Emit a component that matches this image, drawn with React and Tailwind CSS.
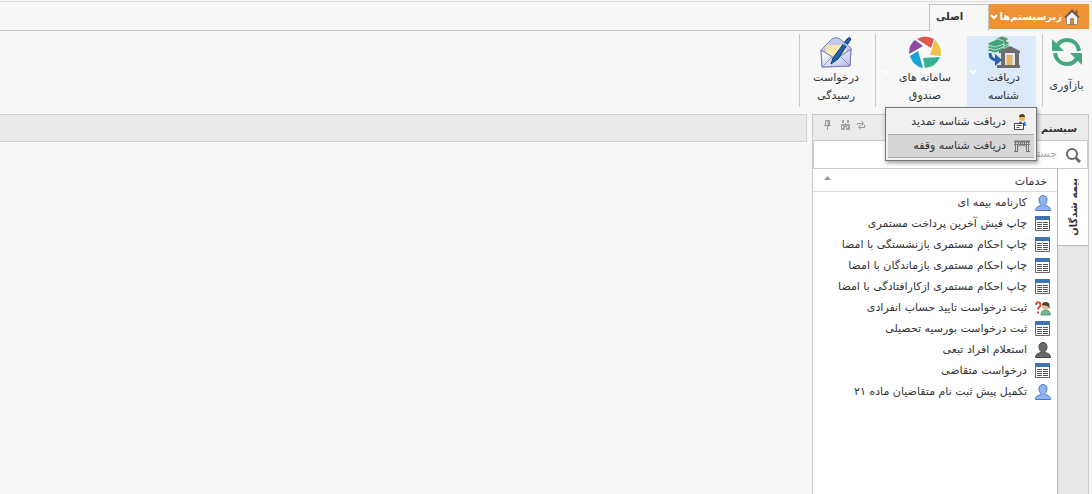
const houseColors = { wall: '#f7f4ef', roof: '#4f5560', door: '#c98a45' };

function HomeIcon() {
  return (
    <svg className="h-4 w-4 shrink-0" viewBox="0 0 16 16">
      <path d="M11.5 1.5h2v4l-2-2z" fill="#8d4b3a" />
      <path d="M2.500 8 8 3l5.500 5v7.500h-11z" fill={houseColors.wall} stroke="#888" strokeWidth=".8" />
      <path d="M1 8.500 8 1.500l7 7" fill="none" stroke={houseColors.roof} strokeWidth="1.600" />
      <path d="M6.500 9.500h3v6h-3z" fill={houseColors.door} stroke="#555" strokeWidth=".5" />
    </svg>
  );
}

function ReloadIcon() {
  return (
    <svg className="h-8 w-8" viewBox="0 0 32 32" fill="none" stroke="#43a780" strokeWidth="4">
      <path d="M6 10C8 6 12 4 16 4c6 0 11 4 12 11" />
      <path d="M26 22c-2 4-6 6-10 6-6 0-11-4-12-11" />
      <path d="M1 3v12h12zM31 29V17H19z" fill="#43a780" stroke="none" />
    </svg>
  );
}

function BankIcon() {
  return (
    <svg className="h-8 w-8" viewBox="0 0 32 32">
      <g fill="#43a77c" stroke="#e6f4ee" strokeWidth=".7">
        <path d="m8 9 7-3 6 2v2l-7 4-6-3z" />
        <path d="m8 7 7-3 6 2v2l-7 3-6-2z" />
        <path d="m7 3 7-3 6 2v2l-7 3-6-2z" />
        <path d="m0 13 9-4 7 2v3l-9 3-7-2z" />
        <path d="m0 10 9-4 7 2v3l-9 3-7-2z" />
        <path d="m0 7 9-4 7 2v3l-9 3-7-2z" />
      </g>
      <path d="m11 2 2-1 5 3v2l-2 1V5z" fill="#7b8583" />
      <path d="M11 15 22 10l10 5v2H11z" fill="#6d6d6d" />
      <path d="M13 17h4v12h-4zM27 17h4v12h-4zM9 29h23v3H9z" fill="#6d6d6d" />
      <path d="M18.500 19h6v10h-6z" fill="#e5b366" />
      <path d="M2 17c0 5 3 7 7 7" fill="none" stroke="#2d62ae" strokeWidth="3" />
      <path d="m7 18 7 6-7 6z" fill="#2d62ae" />
    </svg>
  );
}

function ApertureIcon() {
  return (
    <svg className="h-8 w-8" viewBox="0 0 32 32">
      <path d="M8 3Q16-2 25 3L22 12z" fill="#e2574c" />
      <path d="M26 4q7 7 6 16l-11-1z" fill="#efc050" />
      <path d="M31 21q-4 10-15 11l-2-10z" fill="#35b294" />
      <path d="M14 32Q4 30 1 20l8-5z" fill="#16a2d7" />
      <path d="M0 18Q0 8 6 4l8 6z" fill="#8e4a9e" />
    </svg>
  );
}

function LetterIcon() {
  return (
    <svg className="h-8 w-8" viewBox="0 0 32 32">
      <defs>
        <linearGradient id="paper" x1="0" y1="0" x2="1" y2="1">
          <stop offset="0" stopColor="#fff" />
          <stop offset="1" stopColor="#b9bfe9" />
        </linearGradient>
      </defs>
      <path d="M1 14 12 3q4-3 8 0l11 9-1 18-28 1z" fill="#c5c9ee" stroke="#8085bd" />
      <path d="M6 9h20v12H6z" fill="#fbe6b5" />
      <path d="m1 14 15 9 15-10-1 17-28 1z" fill="url(#paper)" stroke="#7278b5" />
      <path d="m2 31 10-10M30 30 20 20" stroke="#8c91c8" />
      <path d="M13 22 27 3q3-3 4 0L18 23l-7 5z" fill="#1f62ae" stroke="#123a70" />
      <path d="m23 7 5 3" stroke="#a9c8ea" strokeWidth="1.500" />
    </svg>
  );
}

function PersonIcon({ dark }) {
  return (
    <svg className="h-4 w-4" viewBox="0 0 16 16">
      <path
        d="M4 4.500c0-5.300 8-5.300 8 0 0 2.500-.9 4-2 5v1c2.500.8 5.500 1.200 5.500 5H.5c0-3.800 3-4.200 5.500-5v-1c-1.100-1-2-2.500-2-5z"
        fill={dark ? '#6a6a6a' : '#8fb4f3'}
        stroke={dark ? '#444' : '#4a77c4'}
      />
    </svg>
  );
}

function TableIcon() {
  return (
    <svg className="h-4 w-4" viewBox="0 0 16 16">
      <path d="M.5 1.500h14v13H.5z" fill="#fff" stroke="#666" />
      <path d="M0 0h15v4H0z" fill="#3f73b8" />
      <path d="M2 6.500h5M2 8.500h5M2 10.500h5M2 12.500h5M8 6.500h5M8 8.500h5M8 10.500h5M8 12.500h5" stroke="#555" />
    </svg>
  );
}

function QuestionIcon() {
  return (
    <svg className="h-4 w-4" viewBox="0 0 16 16">
      <path d="M1 5c0-4 5-3 4.500 0-.3 2-2.500 2-2.500 4.500M3 11.500v2" fill="none" stroke="#df4a35" strokeWidth="2" />
      <path d="M6 15c0-4 2-5 5-5s4 2 4.500 5z" fill="#6fb795" stroke="#3d7d60" strokeWidth=".7" />
      <circle cx="10.500" cy="6" r="3.500" fill="#e6bd91" />
      <path d="M7 5c0-4 7.500-4 7.500 0v4l-2-3z" fill="#4d4038" />
    </svg>
  );
}

function ClerkIcon() {
  return (
    <svg className="h-4 w-4" viewBox="0 0 16 16">
      <path d="M4 11c0-3 2-4 4.500-4S12 8 12 12H4z" fill="#3d7fd0" />
      <path d="m7 7 2 3 1-3z" fill="#fff" />
      <circle cx="8" cy="4" r="3" fill="#f0b548" />
      <path d="M5 3c0-4 6-4 6 0z" fill="#5a3a1d" />
      <path d="M.5 9.500h9v6h-9z" fill="#fff" stroke="#444" />
      <path d="M2.500 11.500h5M2.500 13.500h3" stroke="#555" />
    </svg>
  );
}

function GateIcon() {
  return (
    <svg className="h-4 w-4" viewBox="0 0 16 16" fill="none" stroke="#777">
      <path d="M0 3.500h16" strokeWidth="2" />
      <path d="M0 6.500h16M4.500 3v4M6.500 3v4M8.500 3v4M10.500 3v4M12.500 3v4M1.500 3v11M3.500 6v8M14.500 3v11M12.500 6v8M0 13.500h4M12 13.500h4" />
      <path d="M4 9q1-2 4-2t4 2" />
    </svg>
  );
}

function Chevron() {
  return (
    <svg className="h-2 w-2 shrink-0" viewBox="0 0 8 8" fill="none" stroke="#fff" strokeWidth="2">
      <path d="m1 2 3 3 3-3" />
    </svg>
  );
}

const services = [
  { title: 'کارنامه بیمه ای', icon: <PersonIcon /> },
  { title: 'چاپ فیش آخرین پرداخت مستمری', icon: <TableIcon /> },
  { title: 'چاپ احکام مستمری بازنشستگی با امضا', icon: <TableIcon /> },
  { title: 'چاپ احکام مستمری بازماندگان با امضا', icon: <TableIcon /> },
  { title: 'چاپ احکام مستمری ازکارافتادگی با امضا', icon: <TableIcon /> },
  { title: 'ثبت درخواست تایید حساب انفرادی', icon: <QuestionIcon /> },
  { title: 'ثبت درخواست بورسیه تحصیلی', icon: <TableIcon /> },
  { title: 'استعلام افراد تبعی', icon: <PersonIcon dark /> },
  { title: 'درخواست متقاضی', icon: <TableIcon /> },
  { title: 'تکمیل پیش ثبت نام متقاضیان ماده ۲۱', icon: <PersonIcon /> },
];

function TopTabs() {
  return (
    <nav className="flex h-[30px] border-t border-[#ddd] pr-[3px] pt-[2px]">
      <button className="flex h-[25px] w-[100px] items-center gap-[2px] bg-[#ef9234] pr-[9px] text-[10px] font-bold text-white">
        <HomeIcon />
        <span className="whitespace-nowrap">زیرسیستم‌ها</span>
        <Chevron />
      </button>
      <button className="w-[60px] border-x border-t border-[#c4c4c4] pb-1 pl-[6px] text-left text-[10px] font-bold text-[#333]">
        اصلی
      </button>
      <div className="flex-1 border-b border-[#c4c4c4]" />
    </nav>
  );
}

function RibbonButton({ icon, lines, className }) {
  return (
    <button className={`flex flex-col items-center text-[11px] leading-[18px] whitespace-nowrap ${className}`}>
      <span className="mb-px">{icon}</span>
      {lines.map((line) => (
        <span key={line}>{line}</span>
      ))}
    </button>
  );
}

function DropMenu() {
  return (
    <div className="absolute top-[71px] -right-px z-10 w-[152px] border border-[#777] bg-[#f0f0f0] p-[2px] text-[11px] shadow-[1px_2px_4px_rgba(0,0,0,0.4)]">
      <button className="flex h-6 w-full items-center gap-2 pr-1 whitespace-nowrap">
        <ClerkIcon />
        دریافت شناسه تمدید
      </button>
      <button className="flex h-6 w-full items-center gap-2 border-y border-[#aaa] bg-[#d6d6d6] pr-1 whitespace-nowrap">
        <GateIcon />
        دریافت شناسه وقفه
      </button>
    </div>
  );
}

function Ribbon() {
  return (
    <div className="flex h-[83px] pt-[3px] pr-[3px]">
      <RibbonButton icon={<ReloadIcon />} lines={['بازآوری']} className="w-[46px] gap-2 pt-[2px] pl-px" />
      <div className="ml-[6px] h-[73px] w-px bg-[#c8c8c8]" />
      <div className="relative mt-[2px] h-[70px] w-[69px] bg-[#dbeafb]">
        <RibbonButton icon={<BankIcon />} lines={['دریافت', 'شناسه']} className="w-full pl-1" />
        <div className="absolute top-8 left-[2px]">
          <Chevron />
        </div>
        <DropMenu />
      </div>
      <div className="relative mt-[2px] w-[91px]">
        <RibbonButton icon={<ApertureIcon />} lines={['سامانه های', 'صندوق']} className="w-[84px]" />
        <div className="absolute top-8 left-[6px]">
          <Chevron />
        </div>
      </div>
      <div className="h-[73px] w-px bg-[#c8c8c8]" />
      <RibbonButton icon={<LetterIcon />} lines={['درخواست', 'رسیدگی']} className="w-[75px] pt-[2px] pr-[3px]" />
      <div className="h-[73px] w-px bg-[#c8c8c8]" />
    </div>
  );
}

function PanelTools() {
  return (
    <svg className="h-[10px] w-[42px]" viewBox="0 0 42 10" fill="none" stroke="#999">
      <path d="M2.500.5h4v5h-4zM5 1h1v5H5zM1 5.500h7M4.500 6v4" />
      <path d="M19 0h2v3h-2zM24 0h2v3h-2zM18 4h4v6h-4zM23 4h4v6h-4zM22 3h1v4h-1z" fill="#a5a5a5" stroke="none" />
      <path d="M19.500 6v2M24.500 6v2" stroke="#ebebeb" />
      <path d="M34.500 5V3.500H40M38.500 1l2 2.500-2 2M41.500 5v2.500H36M37.500 5l-2 2.500 2 2" />
    </svg>
  );
}

function SidePanel() {
  return (
    <aside className="flex w-[277px] shrink-0 flex-col border border-b-0 border-[#c8c8c8] bg-white">
      <div className="flex h-[25px] items-center justify-between bg-[#ebebeb] pt-[2px] pr-[11px] pl-[10px] text-[10px] font-bold">
        <span>سیستم متمرکز</span>
        <div className="pb-2">
          <PanelTools />
        </div>
      </div>
      <label className="flex h-[29px] items-center gap-2 border border-[#ccc] bg-white pr-[6px]">
        <svg className="h-4 w-4" viewBox="0 0 16 16" fill="none" stroke="#666" strokeWidth="2">
          <circle cx="7" cy="7" r="5" />
          <path d="m11 11 4 4" strokeWidth="3" />
        </svg>
        <input
          aria-label="جستجو"
          placeholder="جستجو در منو"
          className="min-w-0 flex-1 bg-transparent text-[11px] outline-none placeholder:text-[#aaa]"
        />
      </label>
      <div className="flex flex-1">
        <div className="w-[30px] bg-[#e7e7e7]">
          <button className="flex h-[77px] w-full items-center justify-center border-b border-[#bbb] bg-white text-[10px] font-bold">
            <span className="rotate-180 whitespace-nowrap [writing-mode:vertical-rl]">بیمه شدگان</span>
          </button>
        </div>
        <section className="flex-1 border-r border-[#b8b8b8]">
          <h2 className="flex h-[23px] items-center justify-between border-b border-[#ddd] pt-1 pr-[10px] pl-[11px] text-[11px]">
            خدمات
            <svg className="mb-2 h-1 w-[7px]" viewBox="0 0 7 4">
              <path d="M0 4 3.500 0 7 4z" fill="#999" />
            </svg>
          </h2>
          <ul className="text-[11px]">
            {services.map((service) => (
              <li key={service.title}>
                <a href="#" className="flex h-[21px] items-center gap-2 pt-px pr-[6px] whitespace-nowrap">
                  {service.icon}
                  {service.title}
                </a>
              </li>
            ))}
          </ul>
        </section>
      </div>
    </aside>
  );
}

function App() {
  return (
    <div
      dir="rtl"
      className="flex min-h-screen flex-col bg-[#f7f7f7] pt-px font-['DejaVu_Sans',sans-serif] text-[#333]"
    >
      <TopTabs />
      <Ribbon />
      <div className="flex flex-1 gap-[5px] pr-[3px]">
        <SidePanel />
        <main className="flex-1">
          <div className="h-[28px] border-y border-r border-[#d0d0d0] bg-[#e9e9e9]" />
        </main>
      </div>
    </div>
  );
}

export default App;
